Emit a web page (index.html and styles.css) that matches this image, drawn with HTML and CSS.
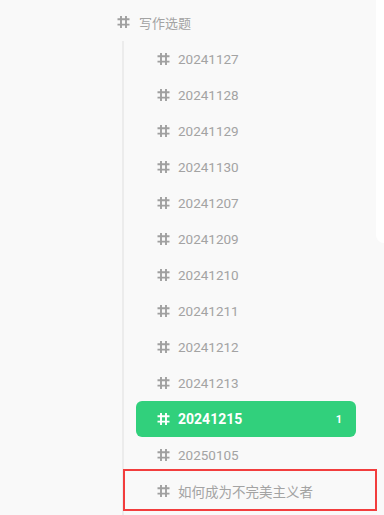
FILE: index.html
```html
<!DOCTYPE html>
<html>
<head>
<meta charset="utf-8">
<link rel="stylesheet" href="styles.css">
</head>
<body>
<div class="side-panel"></div>
<div class="tree">
  <div class="group-head">
    <svg class="hash" viewBox="0 0 13 14"><path d="M4 1v12M9 1v12M0.5 4.2h12M0.5 9.6h12"/></svg>
    <span class="label">写作选题</span>
  </div>
  <div class="children">
    <div class="item"><svg class="hash" viewBox="0 0 13 14"><path d="M4 1v12M9 1v12M0.5 4.2h12M0.5 9.6h12"/></svg><span class="label">20241127</span></div>
    <div class="item"><svg class="hash" viewBox="0 0 13 14"><path d="M4 1v12M9 1v12M0.5 4.2h12M0.5 9.6h12"/></svg><span class="label">20241128</span></div>
    <div class="item"><svg class="hash" viewBox="0 0 13 14"><path d="M4 1v12M9 1v12M0.5 4.2h12M0.5 9.6h12"/></svg><span class="label">20241129</span></div>
    <div class="item"><svg class="hash" viewBox="0 0 13 14"><path d="M4 1v12M9 1v12M0.5 4.2h12M0.5 9.6h12"/></svg><span class="label">20241130</span></div>
    <div class="item"><svg class="hash" viewBox="0 0 13 14"><path d="M4 1v12M9 1v12M0.5 4.2h12M0.5 9.6h12"/></svg><span class="label">20241207</span></div>
    <div class="item"><svg class="hash" viewBox="0 0 13 14"><path d="M4 1v12M9 1v12M0.5 4.2h12M0.5 9.6h12"/></svg><span class="label">20241209</span></div>
    <div class="item"><svg class="hash" viewBox="0 0 13 14"><path d="M4 1v12M9 1v12M0.5 4.2h12M0.5 9.6h12"/></svg><span class="label">20241210</span></div>
    <div class="item"><svg class="hash" viewBox="0 0 13 14"><path d="M4 1v12M9 1v12M0.5 4.2h12M0.5 9.6h12"/></svg><span class="label">20241211</span></div>
    <div class="item"><svg class="hash" viewBox="0 0 13 14"><path d="M4 1v12M9 1v12M0.5 4.2h12M0.5 9.6h12"/></svg><span class="label">20241212</span></div>
    <div class="item"><svg class="hash" viewBox="0 0 13 14"><path d="M4 1v12M9 1v12M0.5 4.2h12M0.5 9.6h12"/></svg><span class="label">20241213</span></div>
    <div class="item active"><svg class="hash" viewBox="0 0 13 14"><path d="M4 1v12M9 1v12M0.5 4.2h12M0.5 9.6h12"/></svg><span class="label">20241215</span><span class="count">1</span></div>
    <div class="item"><svg class="hash" viewBox="0 0 13 14"><path d="M4 1v12M9 1v12M0.5 4.2h12M0.5 9.6h12"/></svg><span class="label">20250105</span></div>
    <div class="item highlighted"><svg class="hash" viewBox="0 0 13 14"><path d="M4 1v12M9 1v12M0.5 4.2h12M0.5 9.6h12"/></svg><span class="label">如何成为不完美主义者</span><span class="focus-ring"></span></div>
  </div>
</div>
</body>
</html>
```
FILE: styles.css
```css
html, body {
  margin: 0;
  padding: 0;
}
body {
  width: 384px;
  height: 515px;
  overflow: hidden;
  background: #f9f9f9;
  font-family: Roboto, "Noto Sans CJK SC", sans-serif;
  position: relative;
}
.side-panel {
  position: absolute;
  top: 0;
  right: 0;
  width: 8px;
  height: 243px;
  background: #ffffff;
  border-bottom-left-radius: 8px;
}
.tree {
  padding-top: 4px;
}
.group-head {
  height: 36px;
  display: flex;
  align-items: center;
  padding-left: 117px;
  color: #a3a3a3;
  font-size: 13px;
}
.group-head .label {
  margin-left: 9px;
}
.hash {
  width: 13px;
  height: 14px;
  flex: none;
}
.hash path {
  stroke: #a0a0a0;
  stroke-width: 1.9;
  fill: none;
}
.children {
  margin-left: 122px;
  margin-top: 1px;
  border-left: 2px solid #ececec;
  padding-left: 12px;
  min-height: 480px;
}
.item {
  position: relative;
  width: 220px;
  height: 36px;
  box-sizing: border-box;
  padding-left: 21px;
  padding-right: 12px;
  display: flex;
  align-items: center;
  font-size: 13.5px;
  color: #a3a3a3;
  border-radius: 6px;
}
.item .label {
  margin-left: 8px;
  flex: 1;
}
.item.active {
  background: #31d07c;
  color: #ffffff;
  font-weight: 700;
  font-size: 14px;
}
.item.active .hash path {
  stroke: #ffffff;
}
.count {
  font-size: 11px;
  font-weight: 700;
  color: #ffffff;
  margin-right: 2px;
}
.focus-ring {
  position: absolute;
  left: -13px;
  top: -4px;
  width: 254px;
  height: 42px;
  box-sizing: border-box;
  border: 2px solid #f23d3d;
}
```
